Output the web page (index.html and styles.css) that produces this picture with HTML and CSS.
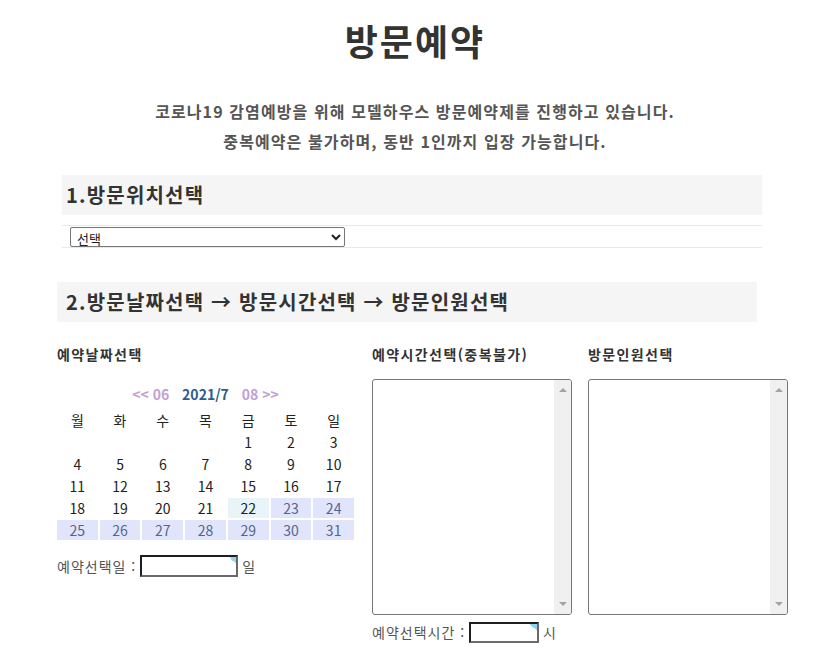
FILE: index.html
```html
<!DOCTYPE html>
<html lang="ko">
<head>
    <meta charset="UTF-8">
    <meta name="viewport" content="width=device-width, initial-scale=1.0">
    <title>방문예약</title>
    <link rel="stylesheet" href="styles.css">
</head>
<body>
    <div class="page">
        <h1 class="title">방문예약</h1>
        <div class="notice">
            <p>코로나19 감염예방을 위해 모델하우스 방문예약제를 진행하고 있습니다.</p>
            <p>중복예약은 불가하며, 동반 1인까지 입장 가능합니다.</p>
        </div>

        <div class="section section-location">
            <h2 class="section-head">1.방문위치선택</h2>
            <div class="location-row">
                <select class="location-select">
                    <option>선택</option>
                </select>
            </div>
        </div>

        <div class="section section-reserve">
            <h2 class="section-head">2.방문날짜선택 → 방문시간선택 → 방문인원선택</h2>
        </div>

        <div class="columns">
            <div class="col col-date">
                <h3 class="col-label">예약날짜선택</h3>
                <div class="cal-nav">
                    <a class="cal-move">&lt;&lt; 06</a>
                    <span class="cal-current">2021/7</span>
                    <a class="cal-move">08 &gt;&gt;</a>
                </div>
                <div class="calendar" id="calendar">
                    <div class="cal-cell">월</div>
                    <div class="cal-cell">화</div>
                    <div class="cal-cell">수</div>
                    <div class="cal-cell">목</div>
                    <div class="cal-cell">금</div>
                    <div class="cal-cell">토</div>
                    <div class="cal-cell">일</div>
                </div>
                <div class="pick-row">
                    <span>예약선택일 :</span>
                    <input type="text" class="pick-input date-input" readonly>
                    <span>일</span>
                </div>
            </div>

            <div class="col col-time">
                <h3 class="col-label">예약시간선택(중복불가)</h3>
                <div class="pick-box">
                    <div class="pick-list"></div>
                    <div class="scrollbar">
                        <span class="arrow arrow-up"></span>
                        <span class="arrow arrow-down"></span>
                    </div>
                </div>
                <div class="pick-row time-row">
                    <span>예약선택시간 :</span>
                    <input type="text" class="pick-input time-input" readonly>
                    <span>시</span>
                </div>
            </div>

            <div class="col col-people">
                <h3 class="col-label">방문인원선택</h3>
                <div class="pick-box">
                    <div class="pick-list"></div>
                    <div class="scrollbar">
                        <span class="arrow arrow-up"></span>
                        <span class="arrow arrow-down"></span>
                    </div>
                </div>
            </div>
        </div>
    </div>

    <script>
        // 2021년 7월 달력 (월요일 시작)
        const calendar = document.getElementById('calendar');
        const firstDay = 4; // 7/1 = 목요일
        const lastDate = 31;
        const today = 22;

        for (let i = 0; i < firstDay; i++) {
            const empty = document.createElement('div');
            empty.className = 'cal-cell';
            calendar.appendChild(empty);
        }
        for (let d = 1; d <= lastDate; d++) {
            const cell = document.createElement('div');
            cell.className = 'cal-cell';
            if (d === today) cell.classList.add('today');
            if (d > today) cell.classList.add('open');
            cell.textContent = d;
            calendar.appendChild(cell);
        }
    </script>
</body>
</html>
```

FILE: styles.css
```css
body {
    margin: 0;
    font-family: "Noto Sans CJK KR", "Noto Sans", sans-serif;
    color: #333;
    background-color: #fff;
}
.page {
    width: 830px;
}
.title {
    margin: 0;
    padding-top: 18px;
    font-size: 36px;
    line-height: 44px;
    font-weight: bold;
    letter-spacing: 2px;
    text-align: center;
    color: #333;
}
.notice {
    margin-top: 34px;
    text-align: center;
    font-size: 16px;
    font-weight: bold;
    letter-spacing: 1.1px;
    color: #555;
}
.notice p {
    margin: 0;
    line-height: 30px;
}
.section {
    width: 700px;
}
.section-location {
    margin-top: 19px;
    margin-left: 62px;
}
.section-reserve {
    margin-top: 34px;
    margin-left: 57px;
}
.section-head {
    margin: 0;
    height: 40px;
    line-height: 40px;
    padding-left: 4px;
    background-color: #f5f5f5;
    font-size: 20px;
    font-weight: bold;
    letter-spacing: 1.2px;
    color: #333;
}
.section-reserve .section-head {
    padding-left: 9px;
}
.location-row {
    margin-top: 10px;
    height: 21px;
    padding-left: 8px;
    border-top: 1px solid #e9e9e9;
    border-bottom: 1px solid #e9e9e9;
}
.location-select {
    display: block;
    margin-top: 1px;
    width: 275px;
    height: 20px;
    padding: 0 2px;
    font-family: inherit;
    font-size: 13px;
    color: #222;
    background-color: #fff;
    border: 1px solid #767676;
    border-radius: 2px;
}
.columns {
    display: flex;
    margin-top: 22px;
    margin-left: 57px;
}
.col-date {
    width: 315px;
}
.col-time {
    width: 216px;
}
.col-label {
    margin: 0;
    height: 20px;
    line-height: 20px;
    font-size: 14px;
    font-weight: bold;
    letter-spacing: 1.4px;
    color: #333;
}
.cal-nav {
    width: 297px;
    margin-top: 20px;
    line-height: 20px;
    text-align: center;
    font-size: 14px;
    font-weight: bold;
}
.cal-move {
    color: #c49ed6;
}
.cal-current {
    margin: 0 9px;
    color: #2d5d8c;
}
.calendar {
    display: grid;
    grid-template-columns: repeat(7, 1fr);
    gap: 2px;
    width: 297px;
    margin-top: 6px;
}
.cal-cell {
    height: 20px;
    line-height: 20px;
    text-align: center;
    font-size: 14px;
    color: #222;
}
.cal-cell.today {
    background-color: #e9f4f8;
}
.cal-cell.open {
    background-color: #e1e5fb;
    color: #56668a;
}
.pick-row {
    display: flex;
    align-items: center;
    gap: 4px;
    margin-top: 15px;
    height: 22px;
    font-size: 14px;
    letter-spacing: 1px;
    color: #555;
}
.pick-input {
    box-sizing: border-box;
    height: 22px;
    padding: 0 3px;
    border: 2px solid;
    border-color: #1e1e1e #6a6a6a #6a6a6a #1e1e1e;
    background: #fff linear-gradient(to bottom left, #8fd4f2 50%, transparent 50%) no-repeat top right / 7px 7px;
    outline: none;
}
.date-input {
    width: 98px;
}
.time-row {
    margin-top: 6px;
}
.time-input {
    width: 70px;
    height: 21px;
}
.pick-box {
    box-sizing: border-box;
    display: flex;
    margin-top: 15px;
    width: 200px;
    height: 236px;
    border: 1px solid #767676;
    border-radius: 3px;
    overflow: hidden;
    background-color: #fff;
}
.pick-list {
    flex: 1;
}
.scrollbar {
    display: flex;
    flex-direction: column;
    justify-content: space-between;
    align-items: center;
    width: 17px;
    padding: 8px 0;
    background-color: #f0f0f0;
}
.arrow {
    width: 0;
    height: 0;
    border-left: 4px solid transparent;
    border-right: 4px solid transparent;
}
.arrow-up {
    border-bottom: 4px solid #a3a3a3;
}
.arrow-down {
    border-top: 4px solid #a3a3a3;
}
```
